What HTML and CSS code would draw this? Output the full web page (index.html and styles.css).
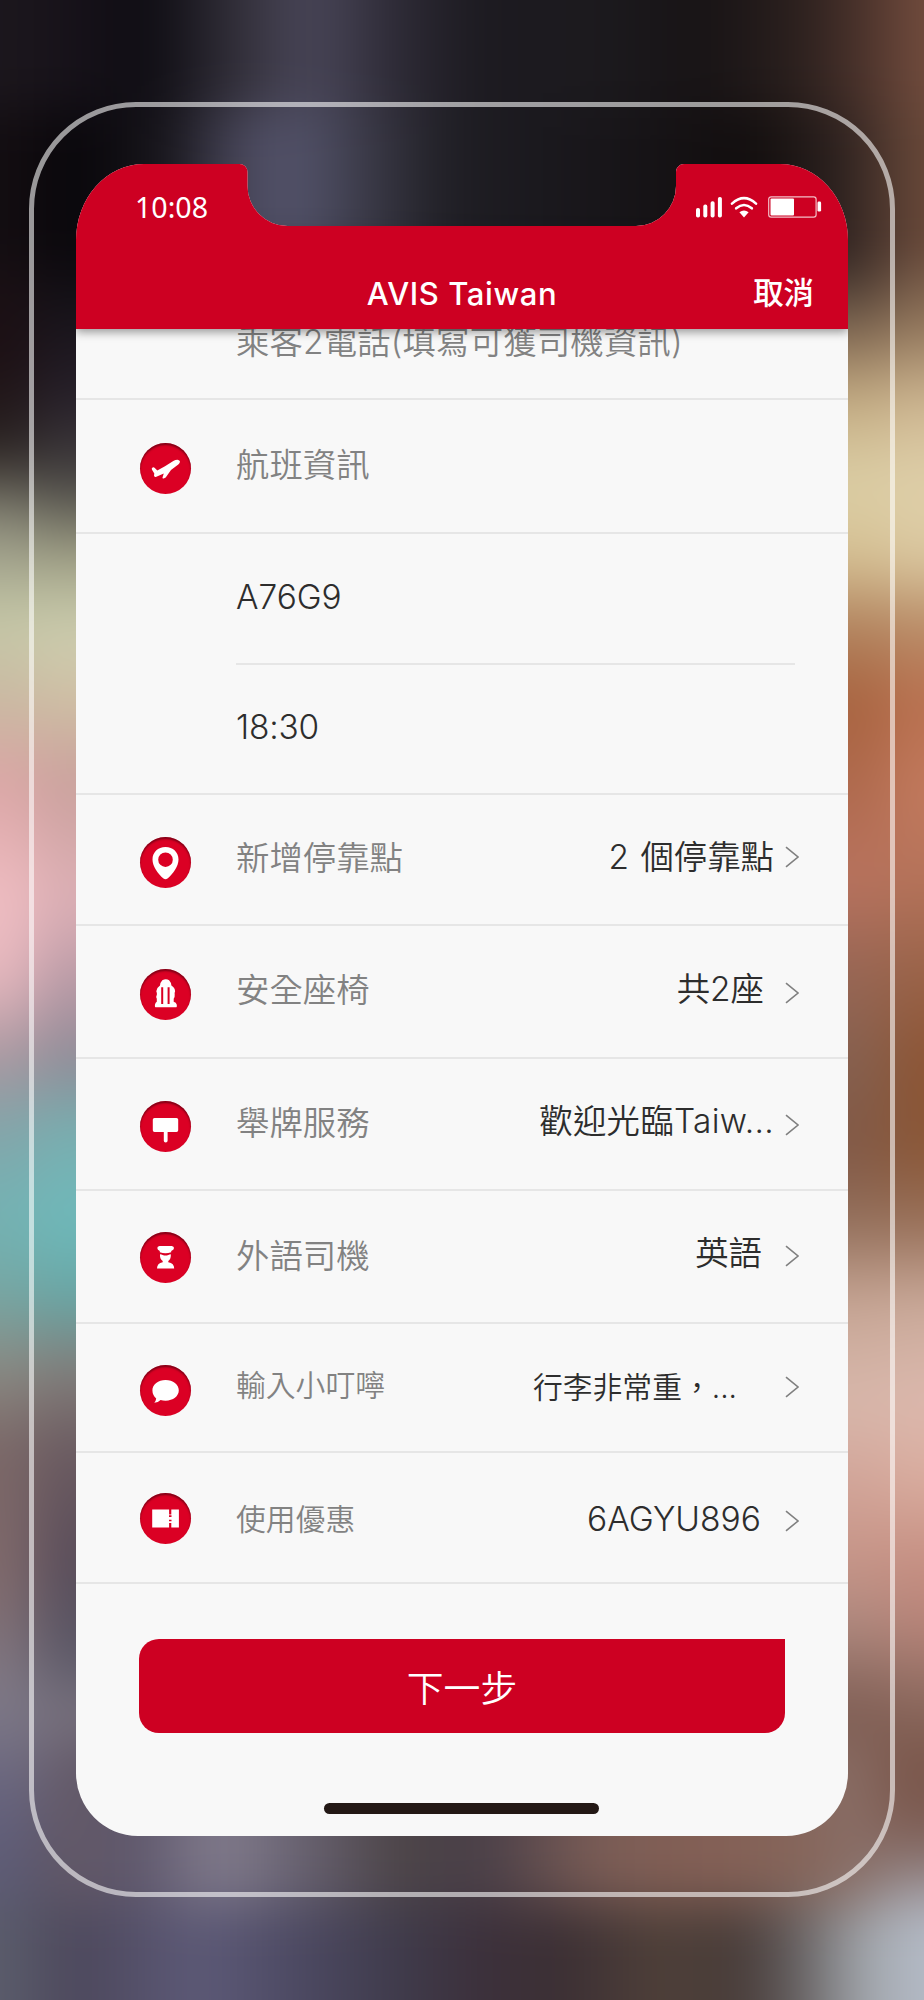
FILE: index.html
```html
<!DOCTYPE html>
<html lang="zh-Hant">
<head>
<meta charset="utf-8">
<title>AVIS Taiwan</title>
<link rel="stylesheet" href="styles.css">
</head>
<body>
<div class="stage">
  <div class="backdrop" aria-hidden="true">
    <div class="glow glow-left-outer"></div>
    <div class="glow glow-left-inner"></div>
    <div class="glow glow-right-inner"></div>
    <div class="glow glow-right-outer"></div>
    <div class="glow glow-top"></div>
    <div class="glow glow-top-low"></div>
    <div class="glow glow-bottom-high"></div>
    <div class="glow glow-bottom"></div>
  </div>
  <div class="phone">
    <main class="screen">
      <header class="header">
        <div class="status">
          <span class="clock">10:08</span>
          <svg class="indicators" width="128" height="24" viewBox="0 0 128 24" fill="none">
            <g fill="#fff">
              <rect x="0" y="12" width="4" height="9.5" rx="1.8"/>
              <rect x="7.3" y="8.6" width="4" height="12.9" rx="1.8"/>
              <rect x="14.6" y="5.2" width="4" height="16.3" rx="1.8"/>
              <rect x="21.9" y="1" width="4" height="20.5" rx="1.8"/>
              <path d="M48 21.4l-4.6-5.2q4.6-3.2 9.2 0z"/>
              <rect x="74.5" y="2.6" width="23.5" height="17" rx="1"/>
              <rect x="121.5" y="5.6" width="3.6" height="10" rx="1.4"/>
            </g>
            <path d="M36 7.6Q48-3.2 60 7.6M40.2 12.3q7.8-6.6 15.6 0" stroke="#fff" stroke-width="2.6" stroke-linecap="round"/>
            <rect x="72.7" y=".8" width="47.4" height="20.4" rx="2.4" stroke="#fff" stroke-opacity=".75" stroke-width="1.2"/>
          </svg>
        </div>
        <div class="titlebar">
          <h1 class="title">AVIS Taiwan</h1>
          <span class="cancel">取消</span>
        </div>
      </header>
      <section class="list">
        <div class="row row-passenger"><span class="label">乘客2電話(填寫可獲司機資訊)</span></div>
        <div class="row row-flight">
          <span class="icon"><svg viewBox="0 0 51 51"><path fill="#fff" d="M12.600 24.400q1.200-.6 2.200.6l2.500 2.500 7.700-4.300 8.300-5.200q2.700-1.400 5-1.100 1.700.4 1.700 1.900-.3 1.500-1.700 2.600L31 27l-5.300 7.400-2 1q-1.500.2-1.200-.9l1.300-4.100-8 3.500q-1.700.3-1.800-1.400l.3-2-2.300-3.700q-.8-1.800.6-2.400z"/></svg></span>
          <span class="label">航班資訊</span>
        </div>
        <div class="row row-number"><span class="entry">A76G9</span></div>
        <div class="row row-time"><span class="entry">18:30</span></div>
        <div class="row row-stops">
          <span class="icon"><svg viewBox="0 0 51 51"><path fill="#fff" fill-rule="evenodd" d="M25.5 10c7.6 0 13 5.4 13 12.4 0 6.7-5.4 14.4-11 19q-2 1.5-4 0c-5.600-4.600-11-12.300-11-19C12.500 15.400 17.900 10 25.500 10zm0 5.400a7.300 7.300 0 1 0 0 14.600 7.300 7.300 0 0 0 0-14.600z"/></svg></span>
          <span class="label">新增停靠點</span><span class="value">2 個停靠點</span>
          <svg class="chevron" viewBox="0 0 14 22"><path d="M1 1.200L13 11 1 20.800"/></svg>
        </div>
        <div class="row row-seats">
          <span class="icon"><svg viewBox="0 0 51 51"><path fill="#fff" d="M22.300 11.300q3.700-2 6.800 0 2 2 2.300 5.300 3.500 2.300 3.700 5.700-.8 1.700-.4 3.300.3 2.400-1 4.200v2.900q2.500.8 3 2.700.6 2.900-1 2.900H16q-1.500 0-1-2.900.5-1.900 1.800-2.700v-2.900q-1.200-1.800.1-4.200.2-1.600-.6-3.300.3-3.400 3.700-5.700.3-3.300 2.300-5.300z"/><path stroke="#db0024" stroke-width="2" d="M22.200 18.200V35M28.600 18.200V35"/></svg></span>
          <span class="label">安全座椅</span><span class="value">共2座</span>
          <svg class="chevron" viewBox="0 0 14 22"><path d="M1 1.200L13 11 1 20.800"/></svg>
        </div>
        <div class="row row-sign">
          <span class="icon"><svg viewBox="0 0 51 51"><path fill="#fff" d="M14.500 17h22q1.700 0 1.700 1.600v10.700q0 1.700-1.700 1.700h-8.900v8.800q0 1.700-1.900 1.700t-1.900-1.700V31h-9.300q-1.700 0-1.700-1.700V18.600q0-1.600 1.700-1.600z"/></svg></span>
          <span class="label">舉牌服務</span><span class="value">歡迎光臨Taiw...</span>
          <svg class="chevron" viewBox="0 0 14 22"><path d="M1 1.200L13 11 1 20.800"/></svg>
        </div>
        <div class="row row-driver">
          <span class="icon"><svg viewBox="0 0 51 51"><path fill="#fff" d="M19.500 14h12.300q2.200.3 2.200 2.100t-2.800 2.900v1.300q-5.800 1.700-11.400 0V19q-2.500-1.100-2.500-2.900t2.200-2.100zM20 22.300q1.500 0 2.700.7 2.800 1 5.600 0 1.200-.7 2.500-.7.500 4.600-2.500 6.600v1.300q5.900.8 5.900 6.400H17q0-5.600 5.700-6.400v-1.300q-3.200-2-2.700-6.600z"/></svg></span>
          <span class="label">外語司機</span><span class="value">英語</span>
          <svg class="chevron" viewBox="0 0 14 22"><path d="M1 1.200L13 11 1 20.800"/></svg>
        </div>
        <div class="row row-note">
          <span class="icon"><svg viewBox="0 0 51 51"><path fill="#fff" d="M25.600 15c7.400 0 13.200 4.400 13.200 10.300s-5.800 10.400-13.200 10.400q-2.800 0-5-.8-2.700 2.800-6.300 2.800 1.500-1.300 1.900-4.200-3.800-3.500-3.800-8.200C12.400 19.400 18.200 15 25.600 15z"/></svg></span>
          <span class="label">輸入小叮嚀</span><span class="value">行李非常重，...</span>
          <svg class="chevron" viewBox="0 0 14 22"><path d="M1 1.200L13 11 1 20.800"/></svg>
        </div>
        <div class="row row-coupon">
          <span class="icon"><svg viewBox="0 0 51 51"><path fill="#fff" d="M12.200 16.600h16.900v4.900h2.200v-4.900h7.600v17.800h-7.600v-4.500h-2.200v4.500H12.200z"/><path stroke="#db0024" stroke-width="1.600" d="M29 23.100h2.500M29 27.500h2.500"/></svg></span>
          <span class="label">使用優惠</span><span class="value">6AGYU896</span>
          <svg class="chevron" viewBox="0 0 14 22"><path d="M1 1.200L13 11 1 20.800"/></svg>
        </div>
      </section>
      <button class="next" type="button">下一步</button>
      <div class="home-indicator"></div>
    </main>
  </div>
</div>
</body>
</html>
```

FILE: styles.css
```css
* { box-sizing: border-box; }

body {
  margin: 0;
  font-family: Inter, "Noto Sans CJK TC", sans-serif;
}

.stage {
  position: relative;
  width: 924px;
  height: 2000px;
  padding: 102px 29px 103px;
  overflow: hidden;
  background: #1b181d;
}

/* Out-of-focus photo behind the phone: colour bands blurred together */
.backdrop { position: absolute; inset: 0; filter: blur(26px); }
.glow { position: absolute; }

.glow-left-outer {
  left: -120px; top: -40px; width: 155px; height: 2080px;
  background: linear-gradient(#1c171d 40px, #140f14 140px, #1d1014 400px, #2a2322 490px, #8c8b7b 560px, #c6c9a8 660px, #c9b9a2 740px, #dba5a5 820px, #f0bec3 940px, #e5b7bd 1020px, #a8969f 1100px, #86a3a8 1160px, #74b3b4 1250px, #76a8a5 1330px, #8b8982 1410px, #7a6666 1490px, #806a6c 1620px, #7f7a88 1740px, #65627d 1840px, #5b5a73 1940px, #55576a 2040px);
}
.glow-left-inner {
  left: 35px; top: -40px; width: 150px; height: 2080px;
  background: linear-gradient(#141117 40px, #050408 140px, #0d0b10 300px, #27202a 440px, #464342 520px, #a3a388 600px, #cdcfb0 670px, #cfbfa4 740px, #c9a09c 820px, #ddb0b6 940px, #b99aa6 1020px, #8f8a96 1100px, #7aacae 1160px, #6ebabb 1260px, #68a5a4 1340px, #837d7a 1410px, #6a5a60 1490px, #5a4d5a 1600px, #5a5766 1690px, #7b7480 1760px, #665d6c 1840px, #574f63 1890px, #4f495f 1970px, #50495c 2040px);
}
.glow-right-inner {
  left: 740px; top: -40px; width: 150px; height: 2080px;
  background: linear-gradient(#2b201e 40px, #33241f 140px, #241b1a 240px, #4b3a32 320px, #947a5f 390px, #c4ac83 440px, #dccfa6 520px, #d5c093 600px, #b38762 660px, #a8633f 740px, #af6a4e 830px, #b9735f 920px, #9a6755 1000px, #85604f 1100px, #815845 1190px, #96735f 1270px, #c6a594 1340px, #d8b8ac 1440px, #d2a599 1520px, #c69487 1600px, #b08a80 1660px, #836259 1740px, #795549 1800px, #835f55 1870px, #8f8584 1940px, #b0b5be 2040px);
}
.glow-right-outer {
  left: 888px; top: -40px; width: 160px; height: 2080px;
  background: linear-gradient(#6f4b3c 40px, #6f4a3b 190px, #6b5042 290px, #8d7157 360px, #cdb590 440px, #dfd0aa 520px, #dbc8a0 600px, #b98f6a 660px, #b86f4e 740px, #c27a5e 830px, #b5735a 920px, #9c654b 1000px, #8c5535 1100px, #8a5737 1190px, #9a735d 1270px, #c9a999 1340px, #dcb9ae 1440px, #d9ac9e 1520px, #c68f82 1600px, #b9857a 1660px, #8c6a5f 1740px, #7a564a 1800px, #7d5d54 1870px, #a09aa0 1940px, #b2bac5 2010px);
}
.glow-top {
  left: -80px; top: -120px; width: 1084px; height: 230px;
  background: linear-gradient(90deg, #1c171d 80px, #17121a 150px, #0e0c12 230px, #37343f 330px, #4a475a 390px, #2c2934 480px, #1c1a20 560px, #1c1a1e 680px, #171315 780px, #2b201e 880px, #4f352d 950px, #734d3e 1004px);
}
.glow-top-low {
  left: -80px; top: 110px; width: 1084px; height: 155px;
  background: linear-gradient(90deg, #140e12 80px, #08060a 156px, #19171d 250px, #4a485c 320px, #54546c 375px, #363541 460px, #1f1e24 530px, #1a181d 630px, #161316 730px, #110d0d 830px, #2c211f 920px, #523a30 970px, #6b4a3a 1004px);
}
.glow-bottom-high {
  left: 50px; top: 1740px; width: 824px; height: 165px;
  background: linear-gradient(90deg, #645a68 26px, #5c556a 80px, #827c8d 170px, #686271 250px, #4c4447 350px, #493f48 430px, #7b5d56 550px, #835f55 650px, #85655a 750px, #8a7069 810px);
}
.glow-bottom {
  left: -80px; top: 1905px; width: 1084px; height: 200px;
  background: linear-gradient(90deg, #5b5d6c 80px, #4c475b 156px, #5d5a78 280px, #4c4962 380px, #3f3b4b 480px, #3c303b 560px, #3b2f34 640px, #4f4039 740px, #473b38 820px, #666162 880px, #a0a4a9 940px, #b4bbc7 1004px);
}

.phone {
  position: relative;
  width: 866px;
  height: 1795px;
  padding: 57px 42px;
  border: 5px solid rgba(255, 255, 255, .58);
  border-radius: 107px;
}

.screen {
  display: flex;
  flex-direction: column;
  width: 772px;
  height: 1672px;
  background: #f8f8f8;
  clip-path: path("M0 76A68 76 0 0 1 68 0H163.500A8 8 0 0 1 171.500 8V22A40 40 0 0 0 211.500 62H560A40 40 0 0 0 600 22V8A8 8 0 0 1 608 0H704A68 76 0 0 1 772 76V1609A62 63 0 0 1 710 1672H62A62 63 0 0 1 0 1609Z");
}

.header {
  position: relative;
  z-index: 1;
  height: 165px;
  flex: none;
  color: #fff;
  background: #cd0022;
  box-shadow: 0 3px 9px rgba(0, 0, 0, .4);
}
.status {
  display: flex;
  justify-content: space-between;
  height: 96px;
  padding: 23px 24px 0 59px;
}
.clock {
  font: 28.600px/40px "Noto Sans", sans-serif;
}
.indicators { margin-top: 9px; }
.titlebar {
  display: grid;
  grid-template-columns: 1fr auto 1fr;
  align-items: start;
  height: 69px;
  padding: 0 34px;
}
.title {
  grid-column: 2;
  margin: 0;
  font-size: 31px;
  font-weight: 500;
  line-height: 67px;
  letter-spacing: .6px;
}
.cancel {
  justify-self: end;
  font-size: 30.400px;
  font-weight: 500;
  line-height: 67px;
}

.row {
  display: flex;
  align-items: flex-start;
  border-bottom: 2px solid #e6e6e6;
  padding: 0 49px 0 64px;
  color: #2d2d2d;
  font-size: 33.400px;
  font-weight: 350;
  line-height: 40px;
  white-space: nowrap;
}
.icon {
  flex: none;
  width: 51px;
  height: 51px;
  border-radius: 50%;
  background: #db0024;
  box-shadow: inset 0 2px 2px rgba(90, 0, 15, .7);
}
.icon svg { display: block; }
.label { color: #828282; margin-left: 45px; }
.value { margin-left: auto; }
.chevron {
  flex: none;
  width: 14px;
  height: 22px;
  fill: none;
  stroke: #808080;
  stroke-width: 1.600;
}

.row-passenger { height: 71px; }
.row-passenger .label { margin: -7px 0 0 96px; letter-spacing: .15px; }
.row-flight { height: 134px; }
.row-flight .icon { margin-top: 43px; }
.row-flight .label { margin-top: 45px; }
.row-number { height: 131px; margin: 0 53px 0 160px; padding: 43px 0 0; }
.row-time { height: 130px; padding: 42px 0 0 160px; letter-spacing: -.2px; }

.row-stops { height: 131px; }
.row-stops .icon { margin-top: 42px; }
.row-stops .label { margin-top: 43px; }
.row-stops .value { margin-top: 42px; margin-right: 11px; word-spacing: 2px; }
.row-stops .chevron { margin-top: 51px; }

.row-seats { height: 133px; }
.row-seats .icon { margin-top: 43px; }
.row-seats .label { margin-top: 44px; }
.row-seats .value { margin-top: 43px; margin-right: 21px; }
.row-seats .chevron { margin-top: 56px; }

.row-sign { height: 132px; }
.row-sign .icon { margin-top: 42px; }
.row-sign .label { margin-top: 44px; }
.row-sign .value { margin-top: 42px; margin-right: 11px; letter-spacing: .3px; }
.row-sign .chevron { margin-top: 55px; }

.row-driver { height: 133px; }
.row-driver .icon { margin-top: 41px; }
.row-driver .label { margin-top: 45px; }
.row-driver .value { margin-top: 42px; margin-right: 23px; }
.row-driver .chevron { margin-top: 54px; }

.row-note { height: 129px; font-size: 29.800px; }
.row-note .icon { margin-top: 41px; }
.row-note .label { margin-top: 41px; }
.row-note .value { margin-top: 43px; margin-right: 48px; }
.row-note .chevron { margin-top: 52px; }

.row-coupon { height: 131px; font-size: 29.800px; }
.row-coupon .icon { margin-top: 40px; }
.row-coupon .label { margin-top: 46px; }
.row-coupon .value { margin-top: 46px; margin-right: 24px; font-size: 33.600px; }
.row-coupon .chevron { margin-top: 57px; }

.next {
  width: 646px;
  height: 94px;
  margin: 55px 0 0 63px;
  padding: 6px 0 0;
  border: 0;
  border-radius: 20px 0 20px 20px;
  flex: none;
  color: #fff;
  background: #cd0022;
  font-family: inherit;
  font-size: 36.800px;
  font-weight: 350;
  line-height: 50px;
}

.home-indicator {
  width: 275px;
  height: 11px;
  margin: 70px 0 0 248px;
  border-radius: 6px;
  background: #231815;
}
```
